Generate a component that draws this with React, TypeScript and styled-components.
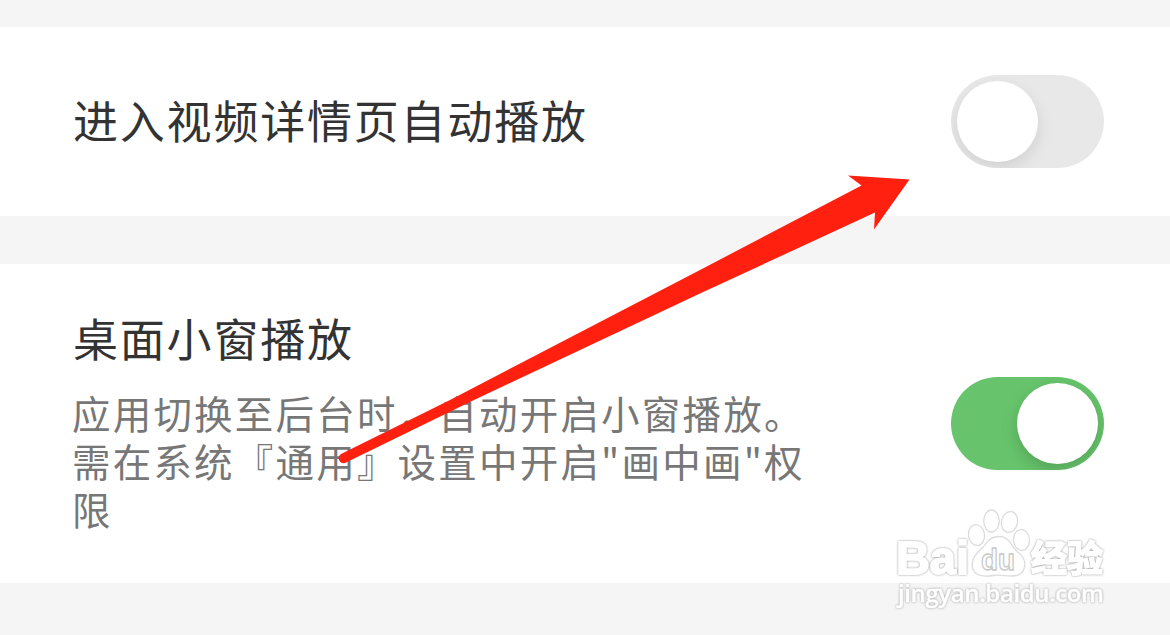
import React from 'react'
import styled, { createGlobalStyle } from 'styled-components';

const MainFont = '"Noto Sans CJK SC", "Liberation Sans", sans-serif';
const titleColor = '#333333';
const textColor = '#777777';
const pageColor = '#f5f5f5';
const onColor = '#67c46c';
const offColor = '#e8e8e8';

const App = () => {
  return (
    <Page>
      <GlobalStyle />
      <Row height={189} top={0}>
        <Title offset={4}>进入视频详情页自动播放</Title>
        <Switch checked={false} />
      </Row>
      <Row height={319} top={48}>
        <div>
          <Title offset={6}>桌面小窗播放</Title>
          <Description>
            应用切换至后台时，自动开启小窗播放。
            <br />
            需在系统『通用』设置中开启"画中画"权限
          </Description>
        </div>
        <Switch checked />
      </Row>
      <Arrow />
      <Watermark />
    </Page>
  )
}

const Switch = ({ checked }: { checked: boolean }) => (
  <Track checked={checked} role="switch" aria-checked={checked}>
    <Knob checked={checked} />
  </Track>
)

const Arrow = () => (
  <Overlay width="1170" height="635" viewBox="0 0 1170 635">
    <path
      d="M341 454 L451 399.5 L700 270 L861.5 185.5 L848 175.5 L909.5 179.5 L874 229.5 L875 212.5 L700 293.5 L473 400.5 L345 463 A5 5 0 0 1 341 454 Z"
      fill="#ff2010"
    />
  </Overlay>
)

const Watermark = () => (
  <Mark width="230" height="110" viewBox="890 505 230 110">
    <g fill="#ffffff" stroke="#dcdcdc" strokeWidth="1.3">
      <ellipse cx="976.5" cy="535" rx="8" ry="10.5" transform="rotate(-8 976.5 535)" />
      <ellipse cx="991.5" cy="521" rx="7.8" ry="11" />
      <ellipse cx="1009.5" cy="522" rx="8" ry="10.5" transform="rotate(12 1009.5 522)" />
      <ellipse cx="1021.5" cy="540" rx="8" ry="10.5" transform="rotate(-5 1021.5 540)" />
      <path d="M999 536.5 C1011 536.5 1010 547 1019 553 C1028 560 1027 576 1012 576 C1004 576 1001 574.5 993 575.5 C978 578 971 573 972.5 562 C974 553 981 551 986 543.5 C989 539 993 536.5 999 536.5 Z" />
    </g>
    <LogoText x="896" y="573.5" size={46} textLength="73" lengthAdjust="spacingAndGlyphs">Bai</LogoText>
    <DuText x="981" y="569.5" textLength="34" lengthAdjust="spacingAndGlyphs">du</DuText>
    <LogoText x="1031" y="571.5" size={36} textLength="72">经验</LogoText>
    <UrlText x="898" y="602" textLength="206">jingyan.baidu.com</UrlText>
  </Mark>
)

const GlobalStyle = createGlobalStyle`
  body {
    margin: 0;
    background: ${pageColor};
    overflow: hidden;
  }
`;

const Page = styled.div`
  position: relative;
  box-sizing: border-box;
  width: 1170px;
  height: 635px;
  padding-top: 27px;
  background: ${pageColor};
  font-family: ${MainFont};
`;

const Row = styled.section<{ height: number; top: number }>`
  display: flex;
  align-items: center;
  justify-content: space-between;
  box-sizing: border-box;
  height: ${(p) => p.height}px;
  margin-top: ${(p) => p.top}px;
  padding: 0 66px 0 73px;
  background: #fff;
`;

const Title = styled.h2<{ offset: number }>`
  margin: 0;
  padding-bottom: ${(p) => p.offset}px;
  color: ${titleColor};
  font-size: 45px;
  font-weight: 400;
  letter-spacing: 1.8px;
  line-height: 60px;
`;

const Description = styled.p`
  width: 760px;
  margin: 14px 0 0 -1px;
  padding-bottom: 7px;
  color: ${textColor};
  font-size: 38.5px;
  letter-spacing: 2.2px;
  line-height: 48px;
`;

const Track = styled.div<{ checked: boolean }>`
  display: flex;
  flex-shrink: 0;
  justify-content: ${(p) => (p.checked ? 'flex-end' : 'flex-start')};
  box-sizing: border-box;
  width: 153px;
  height: 93px;
  padding: 6px;
  border-radius: 47px;
  overflow: hidden;
  background: ${(p) => (p.checked ? onColor : offColor)};
`;

const Knob = styled.div<{ checked: boolean }>`
  width: 81px;
  height: 81px;
  border-radius: 50%;
  background: #fff;
  box-shadow: 0 6px 16px rgba(0, 0, 0, ${(p) => (p.checked ? 0.17 : 0.1)});
`;

const Overlay = styled.svg`
  position: absolute;
  top: 0;
  left: 0;
  pointer-events: none;
`;

const Mark = styled.svg`
  position: absolute;
  top: 505px;
  left: 890px;
`;

const LogoText = styled.text<{ size: number }>`
  fill: #fff;
  stroke: #fff;
  stroke-width: 1.8px;
  filter: drop-shadow(0 0 0.9px #999);
  font-family: "Liberation Sans", "Noto Sans CJK SC", sans-serif;
  font-size: ${(p) => p.size}px;
  font-weight: 700;
`;

const DuText = styled.text`
  fill: #fff;
  stroke: #c8c8c8;
  stroke-width: 1.3px;
  font-family: "Liberation Sans", sans-serif;
  font-size: 29px;
  font-weight: 700;
`;

const UrlText = styled.text`
  fill: #fff;
  stroke: #fff;
  stroke-width: 0.4px;
  filter: drop-shadow(0 0 0.9px #999);
  font-family: "Open Sans", "Noto Sans", sans-serif;
  font-size: 24px;
  font-weight: 600;
`;

export default App
